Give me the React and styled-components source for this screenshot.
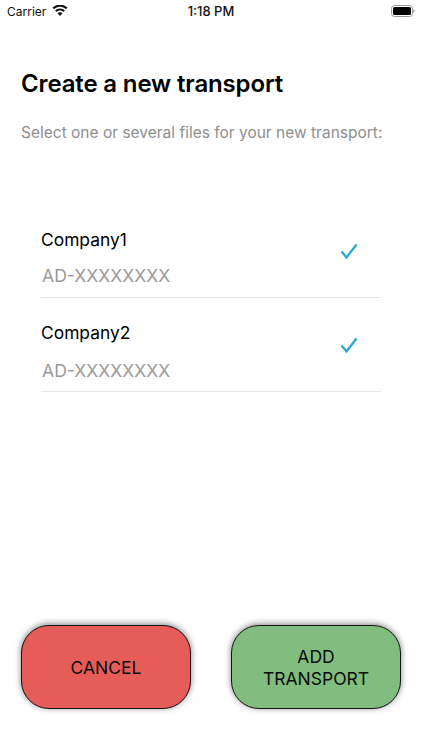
import React from 'react';
import styled, { createGlobalStyle } from 'styled-components';

const GlobalStyle = createGlobalStyle`
  html, body {
    margin: 0;
    padding: 0;
    background: #fff;
  }
  * {
    box-sizing: border-box;
  }
`;

const Screen = styled.div`
  width: 422px;
  height: 750px;
  display: flex;
  flex-direction: column;
  background: #fff;
  color: #000;
  font-family: Inter, "Liberation Sans", sans-serif;
  overflow: hidden;
`;

const StatusBar = styled.div`
  height: 22px;
  padding: 0 7px;
  display: grid;
  grid-template-columns: 1fr auto 1fr;
  align-items: center;
  font-size: 12px;
  color: #111;
`;

const Carrier = styled.div`
  display: flex;
  align-items: center;
  gap: 6px;
`;

const Time = styled.div`
  font-size: 13px;
  font-weight: 500;
`;

const Battery = styled.div`
  justify-self: end;
  display: flex;
`;

const Content = styled.div`
  flex: 1;
  display: flex;
  flex-direction: column;
  padding: 47px 21px 41px;
`;

const Title = styled.h1`
  margin: 0;
  font-size: 24px;
  line-height: 30px;
  font-weight: 600;
  letter-spacing: -0.15px;
`;

const Subtitle = styled.p`
  margin: 23px 0 0;
  font-size: 15.5px;
  line-height: 22px;
  color: #8e8e8e;
  white-space: nowrap;
`;

const List = styled.div`
  margin: 60px 0 0 20px;
  width: 340px;
  flex: 1;
`;

const Row = styled.div`
  height: 94px;
  padding: 0 23px 0 0;
  display: flex;
  align-items: center;
  justify-content: space-between;
  border-bottom: 1px solid #e8e8e8;
`;

const RowText = styled.div`
  display: flex;
  flex-direction: column;
  gap: ${p => p.$gap}px;
  padding-top: 15px;
`;

const Company = styled.div`
  font-size: 17.4px;
  line-height: 22px;
`;

const Code = styled.div`
  font-size: 17.6px;
  line-height: 22px;
  color: #9a9a9a;
  margin-left: 1px;
`;

const Actions = styled.div`
  display: flex;
  justify-content: space-between;
`;

const ActionButton = styled.button`
  width: 170px;
  height: 84px;
  border: 1.5px solid #141414;
  border-radius: 28px;
  background: ${p => p.$bg};
  box-shadow: 0 -1px 6px rgba(0, 0, 0, 0.5);
  color: #0a0a0a;
  font-family: inherit;
  font-size: 17.5px;
  line-height: 22px;
  text-align: center;
  padding: 1px 10px 0;
`;

const WifiIcon = () => (
  <svg width="16" height="12" viewBox="0 0 16 12">
    <path fill="#111" d="M8 1.800c2.300 0 4.400.9 6 2.400l1.500-1.600C13.500.7 10.900-.2 8-.2S2.500.7.500 2.600L2 4.200c1.600-1.500 3.700-2.400 6-2.400z" />
    <path fill="#111" d="M8 5.600c1.300 0 2.400.5 3.300 1.300l1.500-1.500C11.500 4.200 9.800 3.500 8 3.500s-3.500.7-4.800 1.900l1.500 1.500C5.600 6.100 6.700 5.600 8 5.600z" />
    <path fill="#111" d="M8 7.300c-1 0-1.800.4-2.500 1L8 11l2.500-2.700c-.7-.6-1.500-1-2.500-1z" />
  </svg>
);

const BatteryIcon = () => (
  <svg width="24" height="12" viewBox="0 0 24 12">
    <rect x="0.500" y="0.500" width="21" height="11" rx="3" fill="none" stroke="#999" />
    <rect x="2" y="2" width="18" height="8" rx="1.500" fill="#000" />
    <path fill="#999" d="M22.500 4v4c.7-.2 1.200-1 1.200-2s-.5-1.800-1.200-2z" />
  </svg>
);

const CheckIcon = () => (
  <svg width="18" height="16" viewBox="0 0 18 16">
    <path d="M1.500 8.500L6.500 14.500L16.500 1.500" fill="none" stroke="#1eaad2" strokeWidth="2.200" />
  </svg>
);

const companies = [
  { name: 'Company1', gap: 14 },
  { name: 'Company2', gap: 16 },
];

export default function App() {
  return (
    <Screen>
      <GlobalStyle />
      <StatusBar>
        <Carrier>
          Carrier
          <WifiIcon />
        </Carrier>
        <Time>1:18 PM</Time>
        <Battery>
          <BatteryIcon />
        </Battery>
      </StatusBar>
      <Content>
        <Title>Create a new transport</Title>
        <Subtitle>Select one or several files for your new transport:</Subtitle>
        <List>
          {companies.map(c => (
            <Row key={c.name}>
              <RowText $gap={c.gap}>
                <Company>{c.name}</Company>
                <Code>AD-XXXXXXXX</Code>
              </RowText>
              <CheckIcon />
            </Row>
          ))}
        </List>
        <Actions>
          <ActionButton $bg="#e55c58">CANCEL</ActionButton>
          <ActionButton $bg="#80bd7e">ADD<br />TRANSPORT</ActionButton>
        </Actions>
      </Content>
    </Screen>
  );
}
